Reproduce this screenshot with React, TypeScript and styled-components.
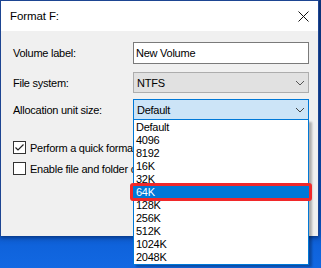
import React from 'react';
import styled, { createGlobalStyle } from 'styled-components';

const GlobalStyle = createGlobalStyle`
  body {
    margin: 0;
    font-family: 'Liberation Sans', Arial, sans-serif;
  }
`;

const Desktop = styled.div`
  width: 321px;
  height: 268px;
  overflow: hidden;
  background: linear-gradient(to bottom, #0f3680 0%, #0c4fb8 80%, #0f63dc 92%, #1268e2 100%);
`;

const Window = styled.div`
  width: 319px;
  box-sizing: border-box;
  border: 1px solid #1d4592;
  border-bottom: none;
  box-shadow: 0 2px 4px rgba(0, 20, 60, 0.5);
`;

const TitleBar = styled.div`
  height: 30px;
  background: #ffffff;
  display: flex;
  align-items: center;
  justify-content: space-between;
  padding: 0 9px 0 9px;
`;

const Title = styled.span`
  font-size: 11.5px;
  color: #000;
  letter-spacing: -0.1px;
`;

const CloseIcon = styled.svg`
  width: 11px;
  height: 11px;
  margin-top: 1px;
`;

const Body = styled.div`
  height: 205px;
  background: #f0f0f0;
  padding: 11px 0 0 11px;
  box-sizing: border-box;
  font-size: 11px;
  letter-spacing: -0.25px;
  color: #000;
`;

const FieldRow = styled.div<{ $top: number }>`
  display: grid;
  grid-template-columns: 121px 176px;
  align-items: center;
  margin-top: ${(p) => p.$top}px;
`;

const Label = styled.span`
  padding-left: 1px;
`;

const TextBox = styled.div`
  height: 22px;
  box-sizing: border-box;
  border: 1px solid #7a7a7a;
  background: #fff;
  display: flex;
  align-items: center;
  padding-left: 2px;
`;

const SelectWrap = styled.div`
  position: relative;
`;

const Select = styled.div<{ $open?: boolean }>`
  height: 21px;
  box-sizing: border-box;
  border: 1px solid ${(p) => (p.$open ? '#0078d7' : '#adadad')};
  background: ${(p) => (p.$open ? '#cce4f7' : '#e1e1e1')};
  display: flex;
  align-items: center;
  justify-content: space-between;
  padding: 0 3px 0 3px;
`;

const Chevron = styled.svg`
  width: 10px;
  height: 6px;
`;

const List = styled.div`
  position: absolute;
  top: 100%;
  left: 0;
  width: 176px;
  box-sizing: border-box;
  border: 1px solid #0078d7;
  border-top: none;
  background: #fff;
  padding: 1px 0 0 0;
  box-shadow: 3px 2px 2px rgba(0, 0, 0, 0.28);
  z-index: 2;
`;

const Item = styled.div<{ $selected?: boolean; $marked?: boolean }>`
  position: relative;
  height: 13px;
  line-height: 13px;
  padding-left: 2px;
  background: ${(p) => (p.$selected ? '#0078d7' : 'transparent')};
  color: ${(p) => (p.$selected ? '#fff' : '#000')};

  ${(p) =>
    p.$marked &&
    `
    &::after {
      content: '';
      position: absolute;
      top: -3px;
      bottom: -2px;
      left: -4px;
      right: -4px;
      border: 3px solid #f0282a;
      border-radius: 3px;
    }
  `}
`;

const Checks = styled.div`
  margin-top: 21px;
  display: flex;
  flex-direction: column;
  gap: 8px;
  white-space: nowrap;
`;

const CheckRow = styled.div`
  display: flex;
  align-items: center;
  height: 13px;
  gap: 4px;
  padding-left: 1px;
`;

const Box = styled.span`
  flex: none;
  width: 13px;
  height: 13px;
  box-sizing: border-box;
  border: 1px solid #333;
  background: #fff;
  display: flex;
  align-items: center;
  justify-content: center;
`;

const sizes = ['Default', '4096', '8192', '16K', '32K', '64K', '128K', '256K', '512K', '1024K', '2048K'];

const DownArrow = ({ color }: { color: string }) => (
  <Chevron viewBox="0 0 10 6">
    <path d="M1 1 L5 5 L9 1" fill="none" stroke={color} strokeWidth="1" />
  </Chevron>
);

const App: React.FC = () => {
  return (
    <Desktop>
      <GlobalStyle />
      <Window>
        <TitleBar>
          <Title>Format F:</Title>
          <CloseIcon viewBox="0 0 11 11">
            <path d="M0.5 0.5 L10.5 10.5 M10.5 0.5 L0.5 10.5" stroke="#111" strokeWidth="1" />
          </CloseIcon>
        </TitleBar>
        <Body>
          <FieldRow $top={0}>
            <Label>Volume label:</Label>
            <TextBox>New Volume</TextBox>
          </FieldRow>
          <FieldRow $top={8}>
            <Label>File system:</Label>
            <Select>
              <span>NTFS</span>
              <DownArrow color="#555" />
            </Select>
          </FieldRow>
          <FieldRow $top={6}>
            <Label>Allocation unit size:</Label>
            <SelectWrap>
              <Select $open>
                <span>Default</span>
                <DownArrow color="#444" />
              </Select>
              <List>
                {sizes.map((s) => (
                  <Item key={s} $selected={s === '64K'} $marked={s === '64K'}>
                    {s}
                  </Item>
                ))}
              </List>
            </SelectWrap>
          </FieldRow>
          <Checks>
            <CheckRow>
              <Box>
                <svg width="11" height="11" viewBox="0 0 11 11">
                  <path d="M1.5 5.5 L4 8 L9.5 2.5" fill="none" stroke="#222" strokeWidth="1.2" />
                </svg>
              </Box>
              <span>Perform a quick format</span>
            </CheckRow>
            <CheckRow>
              <Box />
              <span>Enable file and folder compression</span>
            </CheckRow>
          </Checks>
        </Body>
      </Window>
    </Desktop>
  );
};

export default App;
